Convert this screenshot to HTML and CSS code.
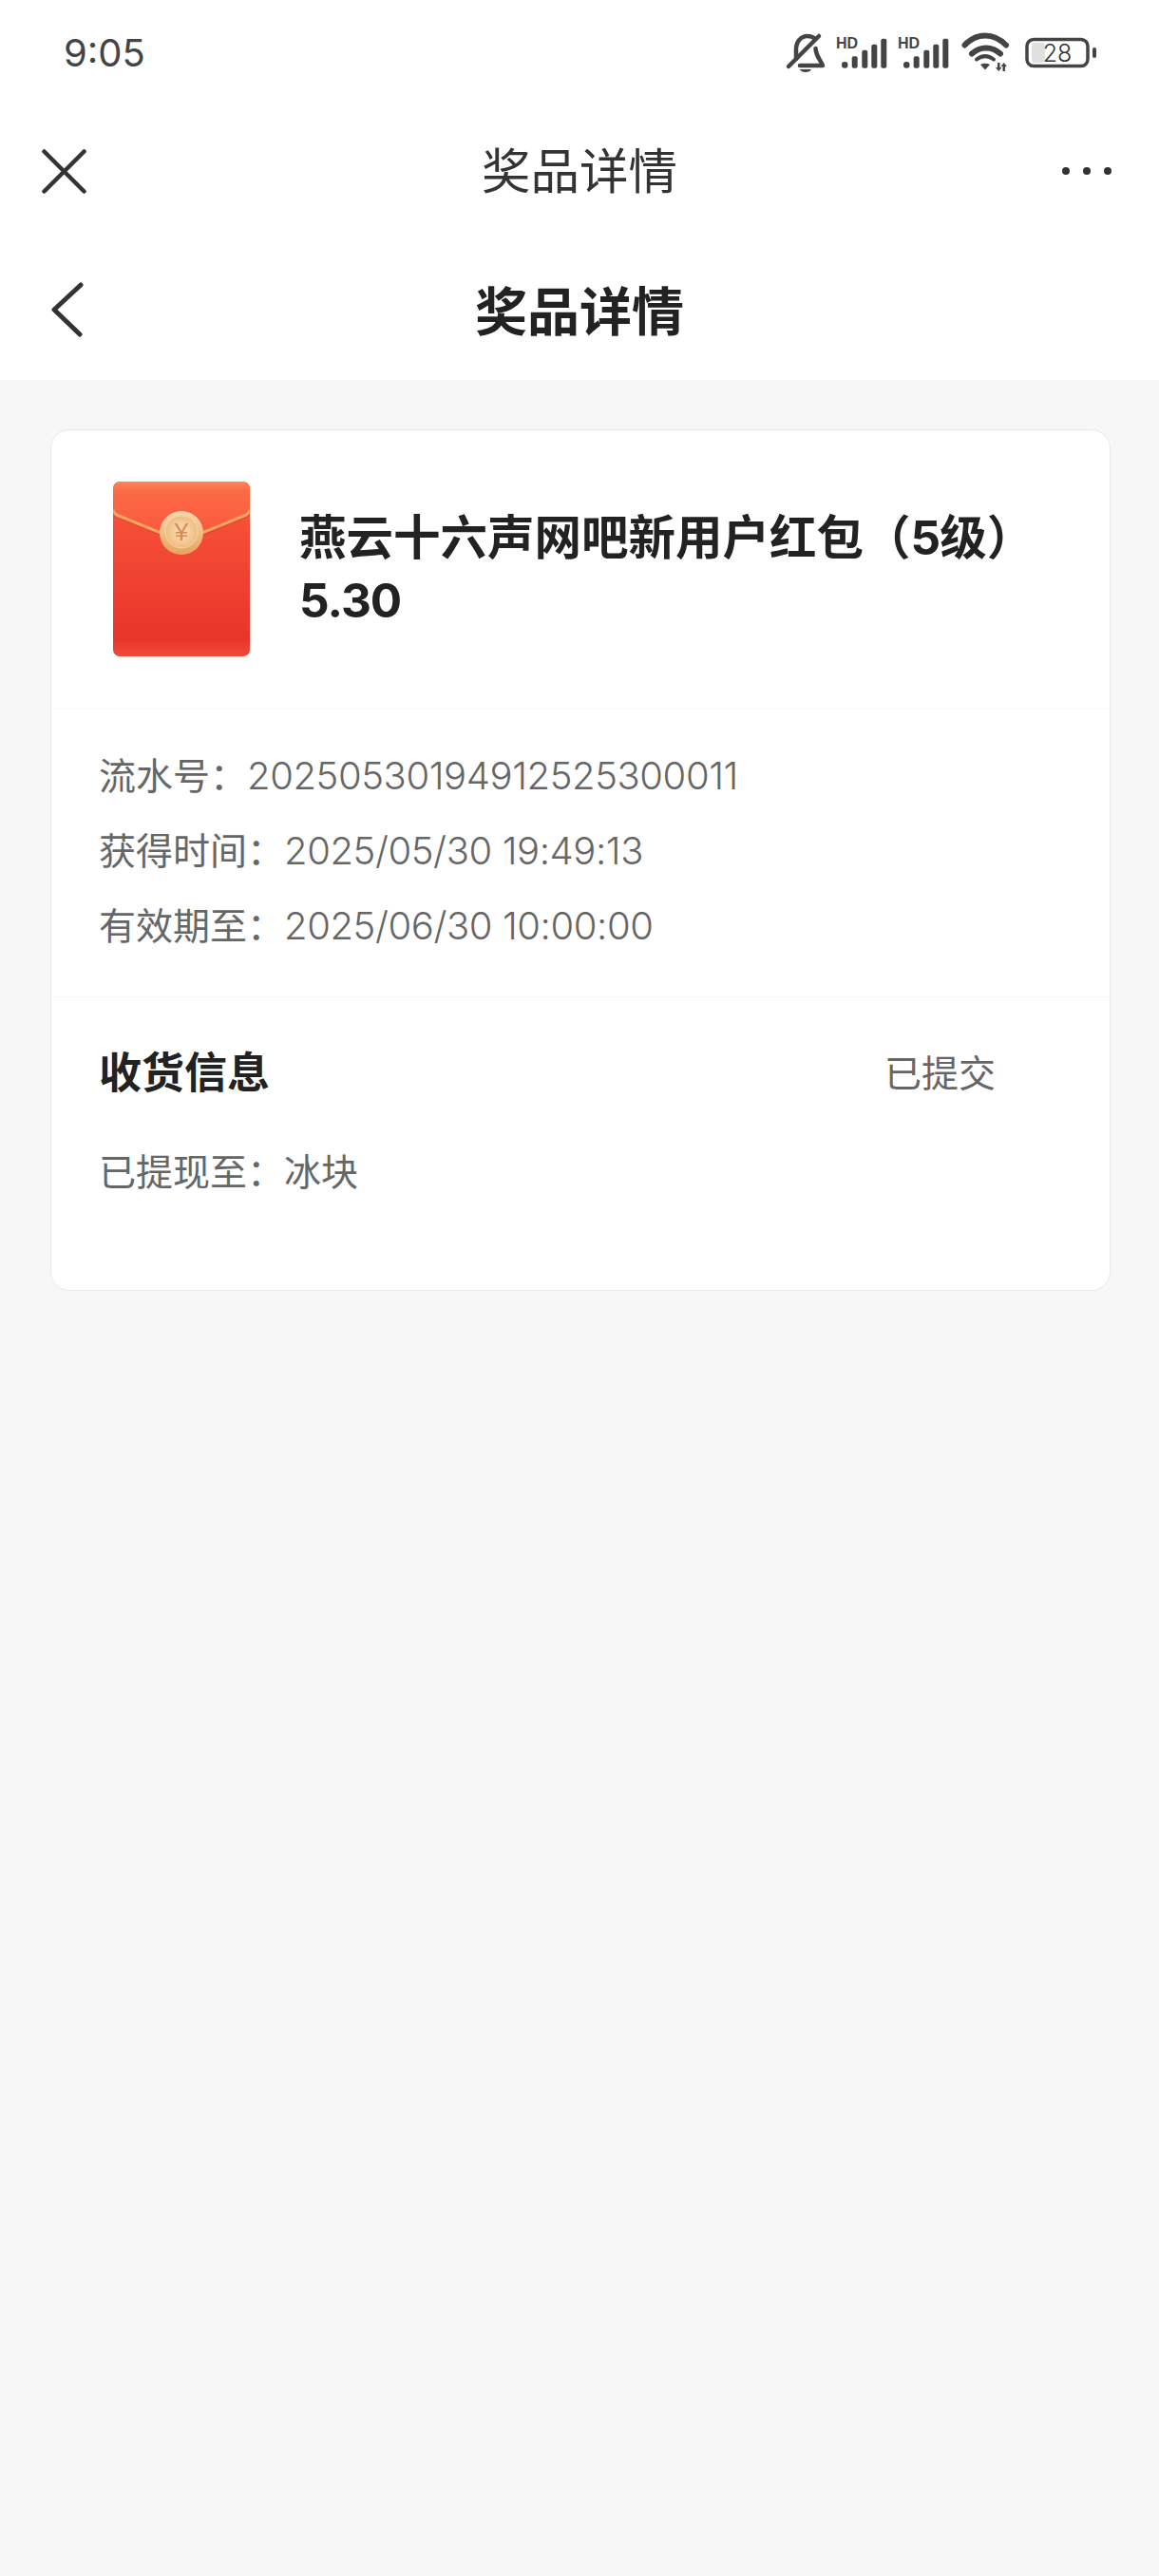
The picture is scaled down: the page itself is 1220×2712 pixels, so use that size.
FILE: index.html
```html
<!DOCTYPE html>
<html lang="zh-CN">
<head>
    <meta charset="UTF-8">
    <meta name="viewport" content="width=device-width, initial-scale=1.0">
    <title>奖品详情</title>
    <link rel="stylesheet" href="styles.css">
</head>
<body>
    <header class="top">
        <div class="status-bar">
            <span class="clock">9:05</span>
            <svg class="status-icons" width="330" height="46" viewBox="0 0 330 46">
                <!-- muted bell -->
                <g fill="none" stroke="#444" stroke-width="4.5" stroke-linecap="round" stroke-linejoin="round">
                    <path d="M13 30V20C13 12 18 6 25 6c3 0 6 1 8 3"/>
                    <path d="M33.5 19c.5 8 5 12 7.500 18H17"/>
                    <path d="M5 38L37 6"/>
                </g>
                <path d="M16.700 41h12.300c-1 2-3 3-6 3s-5-1-6.300-3z" fill="#444"/>
                <!-- signal 1 -->
                <text class="hd" x="55" y="18.700">HD</text>
                <g fill="#444">
                    <rect x="61" y="33" width="6.500" height="6.700" rx="3"/>
                    <rect x="71.700" y="27.300" width="6" height="12.400" rx="2"/>
                    <rect x="82.300" y="20.700" width="6" height="19" rx="2"/>
                    <rect x="92.300" y="14.700" width="6" height="25" rx="2"/>
                    <rect x="102.300" y="8.700" width="6" height="31" rx="2"/>
                </g>
                <!-- signal 2 -->
                <text class="hd" x="120" y="18.700">HD</text>
                <g fill="#444">
                    <rect x="126" y="33" width="6.500" height="6.700" rx="3"/>
                    <rect x="136.700" y="27.300" width="6" height="12.400" rx="2"/>
                    <rect x="147.300" y="20.700" width="6" height="19" rx="2"/>
                    <rect x="157.300" y="14.700" width="6" height="25" rx="2"/>
                    <rect x="167.300" y="8.700" width="6" height="31" rx="2"/>
                </g>
                <!-- wifi -->
                <g fill="none" stroke="#444" stroke-linecap="round">
                    <path d="M190.500 15.500C203 2 221 2 234 15.500" stroke-width="6"/>
                    <path d="M198 24.500c9-8 21-8 30 0" stroke-width="6"/>
                </g>
                <path d="M204 30.500c6-4.500 12-4.500 18 0" fill="none" stroke="#444" stroke-width="4" stroke-linecap="round" transform="translate(-1 0)"/>
                <path d="M207 36c3-1.800 7-1.800 10 0l-5 5.500z" fill="#444"/>
                <path d="M225 34h2.500v5h2l-3.200 4-3.300-4h2zM233 43h-2.500v-5h-2l3.200-4 3.300 4h-2z" fill="#444"/>
                <!-- battery -->
                <rect x="256" y="9.500" width="64" height="28" rx="7" fill="#fff" stroke="#444" stroke-width="3.500"/>
                <rect x="261" y="13" width="14" height="21" rx="3" fill="#e0e0e0"/>
                <text class="batt" x="288" y="33" text-anchor="middle">28</text>
                <rect x="325" y="18" width="4" height="11" rx="2" fill="#444"/>
            </svg>
        </div>

        <div class="web-nav">
            <svg class="close" width="47" height="47" viewBox="0 0 47 47" fill="none" stroke="#333" stroke-width="4.500" stroke-linecap="round">
                <path d="M2.500 2.500l42 42M44.500 2.500l-42 42"/>
            </svg>
            <span class="web-title">奖品详情</span>
            <svg class="more" width="52" height="12" viewBox="0 0 52 12" fill="#333">
                <circle cx="4" cy="6" r="4"/>
                <circle cx="26" cy="6" r="4"/>
                <circle cx="48" cy="6" r="4"/>
            </svg>
        </div>

        <div class="page-nav">
            <svg class="back" width="34" height="58" viewBox="0 0 34 58" fill="none" stroke="#333" stroke-width="5" stroke-linecap="round" stroke-linejoin="round">
                <path d="M31 3L3 29l27 26"/>
            </svg>
            <span class="page-title">奖品详情</span>
        </div>
    </header>

    <main class="card">
        <section class="prize">
            <svg class="envelope" width="144" height="184" viewBox="0 0 144 184">
                <defs>
                    <linearGradient id="bodyFill" x1="0" y1="0" x2="0" y2="1">
                        <stop offset="0" stop-color="#f9583c"/>
                        <stop offset="0.9" stop-color="#e9352b"/>
                        <stop offset="1" stop-color="#ee4a3a"/>
                    </linearGradient>
                    <linearGradient id="flapFill" x1="0" y1="0" x2="0" y2="1">
                        <stop offset="0" stop-color="#fd8a58"/>
                        <stop offset="0.15" stop-color="#fc6a47"/>
                        <stop offset="1" stop-color="#f9563b"/>
                    </linearGradient>
                    <linearGradient id="coinFill" x1="0" y1="0" x2="0" y2="1">
                        <stop offset="0" stop-color="#f8d8ab"/>
                        <stop offset="1" stop-color="#e9a35c"/>
                    </linearGradient>
                    <radialGradient id="coinFace">
                        <stop offset="0" stop-color="#fbe3c0"/>
                        <stop offset="1" stop-color="#f0bb7f"/>
                    </radialGradient>
                </defs>
                <rect width="144" height="184" rx="7" fill="url(#bodyFill)"/>
                <path d="M0 30V9C0 4 4 0 9 0h126c5 0 9 4 9 9v21c-1 3-3 5-6 6L72 62 6 36c-3-1-5-3-6-6z" fill="url(#flapFill)"/>
                <path d="M0 32c1 3 3 5 6 6l66 27 66-27c3-1 5-3 6-6" fill="none" stroke="#d9432c" stroke-width="2.500" opacity="0.5"/>
                <path d="M0 30c1 3 3 5 6 6l66 27 66-27c3-1 5-3 6-6" fill="none" stroke="#f9a660" stroke-width="3"/>
                <circle cx="72" cy="54" r="23" fill="url(#coinFill)"/>
                <circle cx="72" cy="53" r="17" fill="url(#coinFace)" stroke="#f6d5a7" stroke-width="1"/>
                <text class="yen" x="72" y="62" text-anchor="middle">¥</text>
            </svg>
            <h2 class="prize-name">燕云十六声网吧新用户红包（<span class="prize-num">5</span>级）<span class="prize-num">5.30</span></h2>
        </section>

        <section class="details">
            <p class="line">流水号：<span class="num">20250530194912525300011</span></p>
            <p class="line">获得时间：<span class="num">2025/05/30 19:49:13</span></p>
            <p class="line">有效期至：<span class="num">2025/06/30 10:00:00</span></p>
        </section>

        <section class="delivery">
            <div class="delivery-head">
                <h3 class="delivery-title">收货信息</h3>
                <span class="delivery-state">已提交</span>
            </div>
            <p class="line">已提现至：冰块</p>
        </section>
    </main>
</body>
</html>
```

FILE: styles.css
```css
* {
    box-sizing: border-box;
}

html, body {
    margin: 0;
    padding: 0;
}

body {
    min-height: 2712px;
    background-color: #f7f7f7;
    font-family: "Noto Sans CJK SC", "Noto Sans", sans-serif;
}

.top {
    height: 400px;
    background-color: #fff;
}

.status-bar {
    height: 112px;
    padding: 0 65px 2px 67px;
    display: flex;
    align-items: center;
    justify-content: space-between;
}

.clock {
    font-family: Inter, "Noto Sans", sans-serif;
    font-size: 40px;
    color: #444;
}

.hd {
    font-family: "Liberation Sans", sans-serif;
    font-size: 16px;
    font-weight: bold;
    fill: #444;
}

.batt {
    font-family: Inter, sans-serif;
    font-size: 25px;
    font-weight: 300;
    fill: #333;
}

.web-nav {
    height: 136px;
    padding: 0 50px;
    display: grid;
    grid-template-columns: 1fr auto 1fr;
    align-items: center;
}

.close {
    margin-left: -6px;
}

.more {
    justify-self: end;
}

.web-title {
    margin-top: -8px;
    font-size: 51.500px;
    color: #333;
}

.page-nav {
    height: 152px;
    padding: 0 54px;
    display: grid;
    grid-template-columns: 1fr auto 1fr;
    align-items: center;
}

.back {
    margin-top: 4px;
}

.page-title {
    font-size: 55px;
    font-weight: bold;
    color: #222;
}

.card {
    margin: 52px 51px 0 53px;
    height: 907px;
    background-color: #fff;
    border: 1px solid #e9e9e9;
    border-radius: 20px;
}

.prize {
    height: 294px;
    padding: 54px 50px 0 65px;
    display: flex;
    align-items: flex-start;
    gap: 52px;
    border-bottom: 1px solid #f6f6f6;
}

.envelope {
    flex-shrink: 0;
}

.prize-name {
    margin: 23px 0 0;
    font-size: 49.500px;
    line-height: 66px;
    font-weight: bold;
    color: #222;
}

.prize-num {
    font-family: Inter, sans-serif;
    font-weight: 700;
    line-height: 1;
    letter-spacing: -1px;
}

.details {
    height: 303px;
    padding: 28px 50px 0;
    border-bottom: 1px solid #f6f6f6;
}

.line {
    margin: 0;
    font-size: 39px;
    line-height: 79px;
    color: #666;
}

.num {
    font-family: Inter, sans-serif;
    font-size: 40px;
    font-weight: 300;
    line-height: 1;
    letter-spacing: -0.4px;
}

.delivery {
    padding: 44px 50px 0;
}

.delivery-head {
    display: flex;
    align-items: center;
    justify-content: space-between;
    padding-right: 70px;
    margin-bottom: 32px;
}

.delivery-title {
    margin: 0;
    font-size: 45px;
    line-height: 66px;
    font-weight: bold;
    color: #222;
}

.delivery-state {
    font-size: 39px;
    color: #666;
}

.yen {
    font-family: "Liberation Sans", sans-serif;
    font-size: 26px;
    fill: #d98a4e;
}
```
